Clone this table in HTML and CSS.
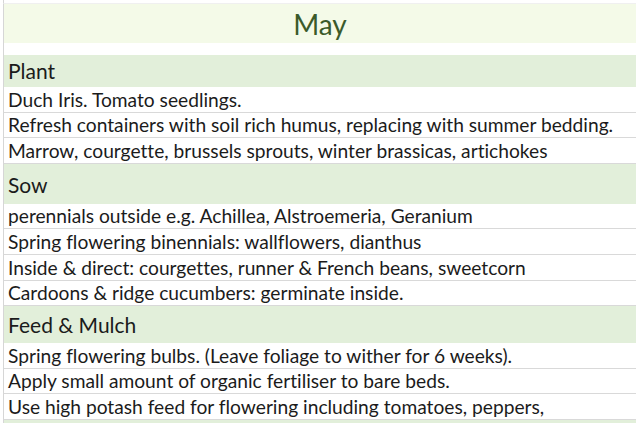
FILE: index.html
```html
<!DOCTYPE html>
<html>
<head>
<meta charset="utf-8">
<link rel="stylesheet" href="styles.css">
</head>
<body>
<div class="sheet">
  <div class="row top-gap"></div>
  <div class="row title">May</div>
  <div class="row gap"></div>
  <div class="row head h-plant">Plant</div>
  <div class="row item">Duch Iris. Tomato seedlings.</div>
  <div class="row item">Refresh containers with soil rich humus, replacing with summer bedding.</div>
  <div class="row item">Marrow, courgette, brussels sprouts, winter brassicas, artichokes</div>
  <div class="row head h-sow">Sow</div>
  <div class="row item">perennials outside e.g. Achillea, Alstroemeria, Geranium</div>
  <div class="row item">Spring flowering binennials: wallflowers, dianthus</div>
  <div class="row item">Inside &amp; direct: courgettes, runner &amp; French beans, sweetcorn</div>
  <div class="row item">Cardoons &amp; ridge cucumbers: germinate inside.</div>
  <div class="row head h-feed">Feed &amp; Mulch</div>
  <div class="row item">Spring flowering bulbs. (Leave foliage to wither for 6 weeks).</div>
  <div class="row item">Apply small amount of organic fertiliser to bare beds.</div>
  <div class="row item">Use high potash feed for flowering including tomatoes, peppers,</div>
  <div class="row head tail"></div>
</div>
</body>
</html>
```
FILE: styles.css
```css
html, body {
  margin: 0;
  padding: 0;
  background: #ffffff;
  overflow: hidden;
}
.sheet {
  display: flex;
  flex-direction: column;
  width: 636px;
  height: 423px;
  overflow: hidden;
  font-family: "Lato", "Open Sans", sans-serif;
  font-variant-ligatures: none;
  color: #1b1b1b;
}
.row {
  margin-left: 3px;
  border-left: 1px solid #d6d6d6;
  padding-left: 4px;
  display: flex;
  align-items: flex-end;
  box-sizing: border-box;
  flex: none;
  white-space: nowrap;
}
.top-gap {
  height: 4px;
  border-bottom: 1px solid #f0f0f0;
}
.title {
  height: 39px;
  background: #f4fae8;
  color: #3b5a2a;
  font-size: 28px;
  justify-content: center;
  align-items: center;
  padding-left: 0;
}
.gap {
  height: 12px;
}
.head {
  background: #e2efda;
  font-size: 21px;
  padding-bottom: 4px;
}
.h-plant { height: 32px; }
.h-sow { height: 40px; padding-bottom: 7px; }
.h-feed { height: 37px; padding-bottom: 6px; }
.item {
  height: 25.6px;
  border-bottom: 1px solid #d9d9d9;
  font-size: 19.2px;
  padding-bottom: 1px;
}
.tail {
  height: 20px;
}
```
